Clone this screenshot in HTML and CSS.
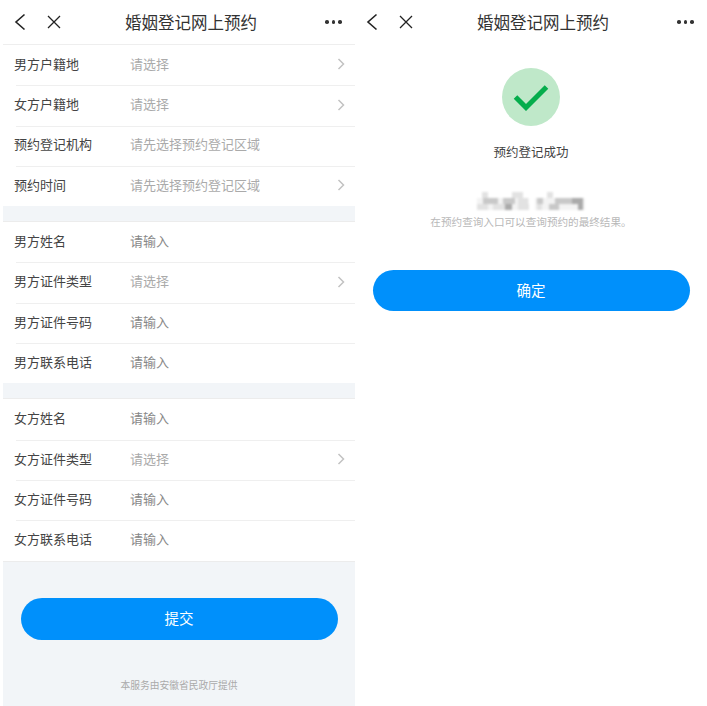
FILE: index.html
```html
<!DOCTYPE html>
<html lang="zh-CN">
<head>
<meta charset="utf-8">
<title>婚姻登记网上预约</title>
<link rel="stylesheet" href="styles.css">
</head>
<body>
<main class="page">
  <section class="screen">
    <header class="nav">
      <svg class="ico-back" viewBox="0 0 12 18"><path d="M10.5 1.5 2 9l8.500 7.500"/></svg>
      <svg class="ico-close" viewBox="0 0 14 14"><path d="M1 1l12 12M13 1 1 13"/></svg>
      <h1 class="nav-title">婚姻登记网上预约</h1>
      <div class="dots"><i></i><i></i><i></i></div>
    </header>
    <div class="form">
      <div class="group group-first">
        <div class="row"><span class="label">男方户籍地</span><span class="value">请选择</span><svg class="chev" viewBox="0 0 8 12"><path d="M1.500 1 6.500 6l-5 5"/></svg></div>
        <div class="row"><span class="label">女方户籍地</span><span class="value">请选择</span><svg class="chev" viewBox="0 0 8 12"><path d="M1.500 1 6.500 6l-5 5"/></svg></div>
        <div class="row"><span class="label">预约登记机构</span><span class="value">请先选择预约登记区域</span></div>
        <div class="row"><span class="label">预约时间</span><span class="value">请先选择预约登记区域</span><svg class="chev" viewBox="0 0 8 12"><path d="M1.500 1 6.500 6l-5 5"/></svg></div>
      </div>
      <div class="group">
        <div class="row"><span class="label">男方姓名</span><span class="value input">请输入</span></div>
        <div class="row"><span class="label">男方证件类型</span><span class="value">请选择</span><svg class="chev" viewBox="0 0 8 12"><path d="M1.500 1 6.500 6l-5 5"/></svg></div>
        <div class="row"><span class="label">男方证件号码</span><span class="value input">请输入</span></div>
        <div class="row"><span class="label">男方联系电话</span><span class="value input">请输入</span></div>
      </div>
      <div class="group">
        <div class="row"><span class="label">女方姓名</span><span class="value input">请输入</span></div>
        <div class="row"><span class="label">女方证件类型</span><span class="value">请选择</span><svg class="chev" viewBox="0 0 8 12"><path d="M1.500 1 6.500 6l-5 5"/></svg></div>
        <div class="row"><span class="label">女方证件号码</span><span class="value input">请输入</span></div>
        <div class="row"><span class="label">女方联系电话</span><span class="value input">请输入</span></div>
      </div>
      <div class="foot">
        <button class="btn" type="button">提交</button>
        <p class="provider">本服务由安徽省民政厅提供</p>
      </div>
    </div>
  </section>
  <section class="screen">
    <header class="nav">
      <svg class="ico-back" viewBox="0 0 12 18"><path d="M10.5 1.5 2 9l8.500 7.500"/></svg>
      <svg class="ico-close" viewBox="0 0 14 14"><path d="M1 1l12 12M13 1 1 13"/></svg>
      <h1 class="nav-title">婚姻登记网上预约</h1>
      <div class="dots"><i></i><i></i><i></i></div>
    </header>
    <div class="result">
      <div class="badge"><svg viewBox="0 0 36 28"><path d="M2.500 14 13 24.500 33.500 4"/></svg></div>
      <p class="result-title">预约登记成功</p>
      <svg class="mosaic" viewBox="0 0 108 20">
        <g class="m-f"><rect x="0" y="8" width="52" height="12"/><rect x="58" y="8" width="50" height="12"/></g>
        <g class="m-l"><rect x="5" y="2" width="6" height="6"/><rect x="35" y="2" width="11" height="6"/><rect x="70" y="2" width="6" height="6"/><rect x="41" y="8" width="10" height="6"/><rect x="0" y="14" width="11" height="6"/><rect x="16" y="14" width="12" height="6"/><rect x="41" y="14" width="11" height="6"/><rect x="60" y="14" width="5" height="6"/></g>
        <g class="m-m"><rect x="6" y="8" width="15" height="6"/><rect x="26" y="8" width="12" height="6"/><rect x="60" y="8" width="6" height="6"/><rect x="78" y="8" width="17" height="6"/><rect x="72" y="14" width="10" height="6"/></g>
        <g class="m-d"><rect x="28" y="14" width="7" height="6"/><rect x="95" y="8" width="11" height="6"/><rect x="101" y="14" width="5" height="6"/></g>
      </svg>
      <p class="note">在预约查询入口可以查询预约的最终结果。</p>
      <button class="btn" type="button">确定</button>
    </div>
  </section>
</main>
</body>
</html>
```

FILE: styles.css
```css
* { box-sizing: border-box; }
html, body { margin: 0; padding: 0; background: #fff; }
body { font-family: "Noto Sans CJK SC", "Liberation Sans", sans-serif; color: #333; }
.page { display: flex; width: 707px; height: 706px; padding-left: 3px; overflow: hidden; }
.screen { width: 352px; height: 706px; display: flex; flex-direction: column; background: #fff; }

.nav { flex: none; height: 44px; display: flex; align-items: center; padding: 0 13.500px 0 11px; position: relative; }
.nav-title { margin: 0 0 0 64px; width: 132px; font-size: 16.500px; line-height: 44px; font-weight: 400; color: #333; white-space: nowrap; }
.ico-back { width: 12px; height: 18px; fill: none; stroke: #222; stroke-width: 1.600; margin-right: 21px; }
.ico-close { width: 14px; height: 14px; fill: none; stroke: #222; stroke-width: 1.300; }
.dots { margin-left: auto; display: flex; gap: 3px; }
.dots i { width: 3.500px; height: 3.500px; border-radius: 50%; background: #333; display: block; }

.form { flex: 1; display: flex; flex-direction: column; background: #f2f5f8; }
.group { background: #fff; border-top: 1px solid #ececec; margin-bottom: 15px; }
.group-first { border-top-color: #eee; }
.group:nth-child(3) { margin-bottom: 0; border-bottom: 1px solid #ececec; }
.row { height: 40.300px; display: flex; align-items: center; padding: 0 10px 3.500px 11px; position: relative; }
.row + .row::before { content: ""; position: absolute; top: 0; left: 13px; right: 0; height: 1px; background: #efefef; }
.label { width: 116px; font-size: 13px; color: #444; white-space: nowrap; }
.value { font-size: 13px; color: #aaa; white-space: nowrap; }
.value.input { color: #888; }
.chev { width: 8px; height: 12px; margin: 2px 0 0 auto; fill: none; stroke: #c2c2c2; stroke-width: 1.500; }

.foot { flex: 1; display: flex; flex-direction: column; align-items: center; padding-top: 36px; }
.btn { display: block; width: 317px; height: 42px; padding: 0 0 2px; border: 0; border-radius: 21px; background: #0090fb; color: #fff; font: inherit; font-size: 14.500px; }
.provider { margin: 37px 0 0; font-size: 9.750px; line-height: 16px; color: #aaa; }

.result { flex: 1; display: flex; flex-direction: column; align-items: center; padding-top: 24px; }
.badge { width: 58px; height: 58px; border-radius: 50%; background: #bfe8c9; display: flex; align-items: center; justify-content: center; }
.badge svg { width: 36px; height: 28px; fill: none; stroke: #05ad4c; stroke-width: 5; }
.result-title { margin: 16px 0 0; font-size: 12.500px; line-height: 20px; color: #444; }
.mosaic { width: 108px; height: 20px; margin-top: 28px; display: block; filter: blur(0.800px); }
.m-f { fill: #f3f3f3; }
.m-l { fill: #e2e2e2; }
.m-m { fill: #c8c8c8; }
.m-d { fill: #aaa; }
.note { margin: 4px 0 0; font-size: 10.600px; line-height: 16px; color: #b8b8b8; white-space: nowrap; }
.result .btn { margin-top: 40px; height: 41px; padding-bottom: 3px; }
```
